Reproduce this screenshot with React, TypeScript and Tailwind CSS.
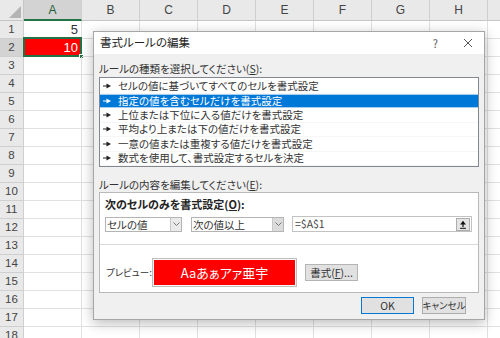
import React from 'react';

const cols = ['A', 'B', 'C', 'D', 'E', 'F', 'G', 'H', ''];
const rows = Array.from({ length: 18 }, (_, i) => i + 1);

const rules = [
  'セルの値に基づいてすべてのセルを書式設定',
  '指定の値を含むセルだけを書式設定',
  '上位または下位に入る値だけを書式設定',
  '平均より上または下の値だけを書式設定',
  '一意の値または重複する値だけを書式設定',
  '数式を使用して、書式設定するセルを決定',
];

function Arrow({ white }: { white?: boolean }) {
  const c = white ? '#ffffff' : '#222222';
  return (
    <svg width="8" height="6" viewBox="0 0 8 6" className="shrink-0">
      <rect x="0" y="2.5" width="4" height="1" fill={c} />
      <polygon points="3.5,0.5 8,3 3.5,5.5" fill={c} />
    </svg>
  );
}

function Combo({ label, width, dark }: { label: string; width: string; dark?: boolean }) {
  return (
    <div className={`flex h-[15px] border border-[#b4b4b4] bg-white ${width}`}>
      <div className="flex-1 truncate pl-[1px] text-[10.5px] leading-[13px] text-[#333]">{label}</div>
      <div className={`flex w-[11px] items-center justify-center border-l border-[#c8c8c8] ${dark ? 'bg-[#dcdcdc]' : 'bg-[#eaeaea]'}`}>
        <svg width="7" height="4" viewBox="0 0 7 4">
          <polyline points="0.5,0.5 3.5,3.5 6.5,0.5" fill="none" stroke="#777" strokeWidth="1" />
        </svg>
      </div>
    </div>
  );
}

function Sheet() {
  return (
    <div className="font-['Liberation_Sans','Noto_Sans_CJK_JP',sans-serif]">
      <div className="flex h-[21px]">
        <div className="relative w-[24px] shrink-0 border-r border-b border-[#c6c6c6] bg-[#e9e9e9]">
          <svg width="12" height="12" viewBox="0 0 12 12" className="absolute right-[2px] bottom-[2px]">
            <polygon points="12,0 12,12 0,12" fill="#b4b4b4" />
          </svg>
        </div>
        {cols.map((c, i) => (
          <div
            key={i}
            className={`flex w-[58px] shrink-0 items-center justify-center border-r border-[#cfcfcf] text-[12px] ${
              c === 'A' ? 'border-b-2 border-b-[#217346] bg-[#d3d3d3] text-[#1e5e38]' : 'border-b border-b-[#c6c6c6] bg-[#e9e9e9] text-[#444]'
            }`}
          >
            {c}
          </div>
        ))}
      </div>
      {rows.map((r) => (
        <div key={r} className="flex h-[18px]">
          <div
            className={`flex w-[24px] shrink-0 items-center justify-center border-r border-b border-[#cfcfcf] text-[11.5px] text-[#444] ${
              r === 2 ? 'bg-[#d3d3d3]' : 'bg-[#e9e9e9]'
            }`}
          >
            {r}
          </div>
          {cols.map((c, i) => {
            const sel = c === 'A' && r === 2;
            return (
              <div
                key={i}
                className={`relative flex w-[58px] shrink-0 items-center justify-end border-r border-b border-[#e1e1e1] pr-[3px] text-[13px] ${
                  sel ? 'bg-[#ff0000] text-white' : 'text-[#333]'
                }`}
              >
                {c === 'A' && r === 1 && '5'}
                {sel && (
                  <>
                    10
                    <div className="absolute -top-[2px] -left-[1px] -right-[1px] -bottom-[1px] border-2 border-[#217346]" />
                    <div className="absolute -right-[3px] -bottom-[3px] h-[5px] w-[5px] border border-white bg-[#217346]" />
                  </>
                )}
              </div>
            );
          })}
        </div>
      ))}
    </div>
  );
}

function Dialog() {
  return (
    <div className="absolute left-[93px] top-[31px] flex h-[289px] w-[392px] flex-col border border-[#a6a6a6] bg-[#f0f0f0] text-[#222] shadow-[0_3px_12px_rgba(0,0,0,0.28)] font-['Noto_Sans_CJK_JP',sans-serif] [font-feature-settings:'palt']">
      <div className="flex h-[22px] shrink-0 items-center bg-white pl-[6px] pr-[11px] text-[11.5px]">
        <span>書式ルールの編集</span>
        <span className="ml-auto mr-[25px] text-[11px] text-[#555]">?</span>
        <svg width="10" height="10" viewBox="0 0 10 10">
          <path d="M1 1 L9 9 M9 1 L1 9" stroke="#555" strokeWidth="1" />
        </svg>
      </div>

      <div className="flex flex-col px-[5px]">
        <div className="pt-[8px] pb-[1px] text-[10.5px] leading-[14px] text-[#333]">
          ルールの種類を選択してください(<span className="underline">S</span>):
        </div>
        <div className="flex h-[90px] flex-col border border-[#828790] bg-white py-[1px]">
          {rules.map((t, i) => (
            <div
              key={t}
              className={`flex h-[14.5px] items-center gap-[7px] pl-[3px] text-[10.5px] ${
                i === 1 ? 'border-y border-[#a9cff0] bg-[#0078d7] text-white' : 'border-b border-[#f6f6f6] text-[#333]'
              }`}
            >
              <Arrow white={i === 1} />
              <span>{t}</span>
            </div>
          ))}
        </div>

        <div className="pt-[11px] text-[10.5px] leading-[14px] text-[#333]">
          ルールの内容を編集してください(<span className="underline">E</span>):
        </div>
        <div className="flex h-[101px] flex-col border border-[#b9b9b9] bg-white">
          <div className="flex h-[52px] flex-col border-b border-[#d9d9d9] px-[5px] pt-[4px]">
            <div className="text-[11px] leading-[14px] font-bold">
              次のセルのみを書式設定(<span className="underline">O</span>):
            </div>
            <div className="mt-[5px] flex items-center">
              <Combo label="セルの値" width="w-[77px]" />
              <div className="ml-[9px]">
                <Combo label="次の値以上" width="w-[93px]" dark />
              </div>
              <div className="ml-[8px] flex h-[16px] w-[180px] items-center border border-[#c2c2c2] bg-white pl-[2px] text-[10.5px] text-[#444]">
                <span className="flex-1">=$A$1</span>
                <div className="mr-[1px] flex h-[13px] w-[14px] items-center justify-center border border-[#adadad] bg-[#e4e4e4]">
                  <svg width="8" height="9" viewBox="0 0 8 9">
                    <path d="M4 1.5 V7" stroke="#111" strokeWidth="1.2" />
                    <polygon points="1,4.5 4,1 7,4.5" fill="#111" />
                    <rect x="1" y="7.8" width="6" height="1" fill="#111" />
                  </svg>
                </div>
              </div>
            </div>
          </div>
          <div className="flex pt-[13px] pl-[6px]">
            <div className="flex h-[29px] w-[46px] items-center whitespace-nowrap text-[9.5px] text-[#333]">プレビュー:</div>
            <div className="flex h-[29px] w-[145px] items-center justify-center border border-[#bdbdbd] bg-[#f7f7f7] p-[1px]">
              <div className="flex h-full w-full items-center justify-center bg-[#ff0000] text-[13px] text-white">
                Aaあぁアァ亜宇
              </div>
            </div>
            <div className="ml-[8px] flex h-[29px] items-center">
              <div className="flex h-[17px] w-[53px] items-center justify-center whitespace-nowrap border border-[#b4b4b4] bg-[#e1e1e1] text-[10.5px] text-[#333]">
                書式(<span className="underline">F</span>)...
              </div>
            </div>
          </div>
        </div>
      </div>

      <div className="mt-[4px] flex justify-end gap-[8px] pr-[18px]">
        <div className="flex h-[17px] w-[53px] items-center justify-center border border-[#0078d7] bg-[#e1e1e1] text-[10.5px] text-[#333]">
          OK
        </div>
        <div className="flex h-[17px] w-[44px] items-center justify-center whitespace-nowrap border border-[#adadad] bg-[#e1e1e1] text-[9.5px] text-[#333]">
          キャンセル
        </div>
      </div>
    </div>
  );
}

export default function App() {
  return (
    <div className="relative h-[338px] w-[500px] overflow-hidden bg-white">
      <Sheet />
      <Dialog />
    </div>
  );
}
